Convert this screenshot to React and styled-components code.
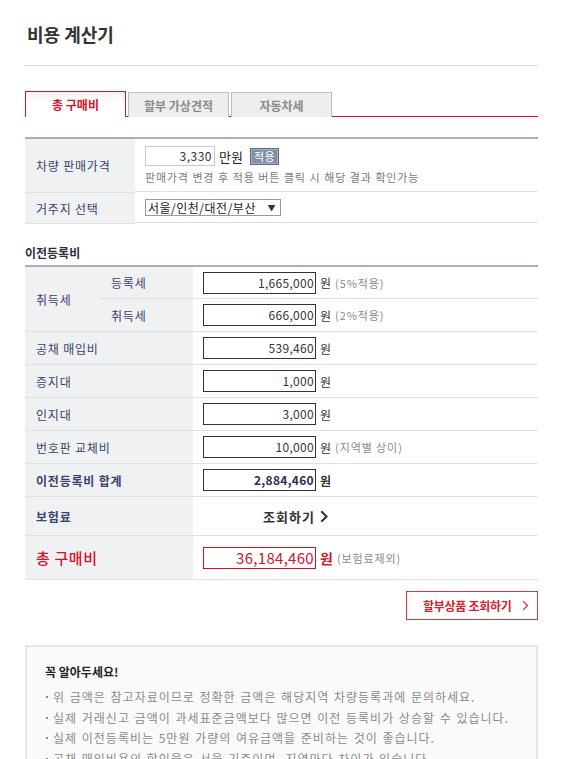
import React from "react";
import styled, { createGlobalStyle } from "styled-components";

const GlobalStyle = createGlobalStyle`
  html, body {
    margin: 0;
    padding: 0;
    background: #fff;
  }
  body {
    font-family: "Noto Sans CJK KR", "Noto Sans", sans-serif;
    color: #333;
    font-size: 12px;
  }
`;

const fees = [
  { label: "공채 매입비", value: "539,460" },
  { label: "증지대", value: "1,000" },
  { label: "인지대", value: "3,000" },
  { label: "번호판 교체비", value: "10,000", note: "(지역별 상이)" },
];

const notices = [
  "위 금액은 참고자료이므로 정확한 금액은 해당지역 차량등록과에 문의하세요.",
  "실제 거래신고 금액이 과세표준금액보다 많으면 이전 등록비가 상승할 수 있습니다.",
  "실제 이전등록비는 5만원 가량의 여유금액을 준비하는 것이 좋습니다.",
  "공채 매입비용의 할인율은 서울 기준이며, 지역마다 차이가 있습니다.",
];

function Chevron({ size = 10, weight = 1.3 }) {
  return (
    <svg width={size * 0.6} height={size} viewBox="0 0 6 10" fill="none">
      <path d="M1 1l4 4-4 4" stroke="currentColor" strokeWidth={weight} />
    </svg>
  );
}

export default function App() {
  return (
    <Page>
      <GlobalStyle />
      <Title>비용 계산기</Title>
      <Divider />

      <TabBar>
        <Tab $active>총 구매비</Tab>
        <Tab>할부 가상견적</Tab>
        <Tab>자동차세</Tab>
      </TabBar>

      <PriceTable>
        <Label $tall>차량 판매가격</Label>
        <Value $tall>
          <InputLine>
            <SmallInput>3,330</SmallInput>
            <Unit>만원</Unit>
            <ApplyButton>적용</ApplyButton>
          </InputLine>
          <Helper>판매가격 변경 후 적용 버튼 클릭 시 해당 결과 확인가능</Helper>
        </Value>
        <Label>거주지 선택</Label>
        <Value>
          <SelectBox>
            서울/인천/대전/부산 <Arrow>▼</Arrow>
          </SelectBox>
        </Value>
      </PriceTable>

      <SectionTitle>이전등록비</SectionTitle>

      <FeeTable>
        <GroupLabel>취득세</GroupLabel>
        <SubLabel $first>등록세</SubLabel>
        <FeeValue $first>
          <AmountBox>1,665,000</AmountBox>
          <Won>원</Won>
          <Note>(5%적용)</Note>
        </FeeValue>
        <SubLabel>취득세</SubLabel>
        <FeeValue>
          <AmountBox>666,000</AmountBox>
          <Won>원</Won>
          <Note>(2%적용)</Note>
        </FeeValue>

        {fees.map((f) => (
          <React.Fragment key={f.label}>
            <FeeLabel>{f.label}</FeeLabel>
            <FeeValue>
              <AmountBox>{f.value}</AmountBox>
              <Won>원</Won>
              {f.note && <Note>{f.note}</Note>}
            </FeeValue>
          </React.Fragment>
        ))}

        <FeeLabel $bold>이전등록비 합계</FeeLabel>
        <FeeValue>
          <AmountBox $bold>2,884,460</AmountBox>
          <Won $bold>원</Won>
        </FeeValue>

        <FeeLabel $bold $height={38}>보험료</FeeLabel>
        <FeeValue $height={38}>
          <LookupLink>
            조회하기
            <Chevron size={13} weight={1.6} />
          </LookupLink>
        </FeeValue>

        <FeeLabel $total $height={43}>총 구매비</FeeLabel>
        <FeeValue $height={43}>
          <AmountBox $total>36,184,460</AmountBox>
          <Won $total>원</Won>
          <Note>(보험료제외)</Note>
        </FeeValue>
      </FeeTable>

      <ButtonRow>
        <OutlineButton>
          할부상품 조회하기
          <Chevron size={11} weight={1.1} />
        </OutlineButton>
      </ButtonRow>

      <NoticeBox>
        <NoticeTitle>꼭 알아두세요!</NoticeTitle>
        <NoticeList>
          {notices.map((n) => (
            <li key={n}>{n}</li>
          ))}
        </NoticeList>
      </NoticeBox>
    </Page>
  );
}

const navy = "#3b4368";
const red = "#d5142a";

const Page = styled.div`
  width: 513px;
  padding: 0 25px 40px;
`;

const Title = styled.h1`
  margin: 0;
  padding: 22px 2px 0;
  font-size: 18px;
  line-height: 24px;
  font-weight: 700;
  color: #333;
  letter-spacing: 0;
`;

const Divider = styled.div`
  margin-top: 19px;
  height: 1px;
  background: #dcdcdc;
`;

const TabBar = styled.div`
  margin-top: 25px;
  display: flex;
  gap: 2px;
  height: 25px;
  border-bottom: 1px solid ${red};
`;

const Tab = styled.div`
  box-sizing: border-box;
  width: 101px;
  height: ${(p) => (p.$active ? "26px" : "25px")};
  margin-bottom: ${(p) => (p.$active ? "-1px" : "0")};
  margin-top: ${(p) => (p.$active ? "0" : "1px")};
  display: flex;
  align-items: center;
  justify-content: center;
  border: 1px solid ${(p) => (p.$active ? red : "#b9bcc7")};
  border-bottom: none;
  background: ${(p) =>
    p.$active ? "linear-gradient(#fbeeee, #ffffff 45%)" : "#eeeeee"};
  color: ${(p) => (p.$active ? red : "#8a8a8a")};
  font-size: 12px;
  font-weight: 700;
  letter-spacing: 0;
`;

const PriceTable = styled.div`
  margin-top: 20px;
  display: grid;
  grid-template-columns: 110px 1fr;
  border-top: 2px solid #a9aeb9;
`;

const Label = styled.div`
  height: ${(p) => (p.$tall ? "53px" : "30px")};
  display: flex;
  align-items: center;
  padding-left: 11px;
  background: #f0f1f3;
  border-bottom: 1px solid #e1e1e1;
  color: ${navy};
  font-size: 12px;
  letter-spacing: 0.8px;
`;

const Value = styled.div`
  height: ${(p) => (p.$tall ? "53px" : "30px")};
  box-sizing: border-box;
  padding: ${(p) => (p.$tall ? "7px 10px 0" : "0 10px")};
  display: flex;
  flex-direction: column;
  justify-content: ${(p) => (p.$tall ? "flex-start" : "center")};
  border-bottom: 1px solid #e1e1e1;
`;

const InputLine = styled.div`
  display: flex;
  align-items: center;
  gap: 4px;
`;

const SmallInput = styled.div`
  box-sizing: border-box;
  width: 70px;
  height: 20px;
  border: 1px solid #c6c8cc;
  padding-right: 2px;
  text-align: right;
  font-size: 12px;
  line-height: 18px;
  color: #333;
  letter-spacing: 0.5px;
`;

const Unit = styled.span`
  font-size: 13px;
  color: #222;
  margin-right: 3px;
`;

const ApplyButton = styled.span`
  box-sizing: border-box;
  height: 17px;
  padding: 0 3px;
  background: #8190a6;
  border: 1px solid #5f6d84;
  box-shadow: inset 0 0 0 1px #a3afc1;
  color: #fff;
  font-size: 11px;
  line-height: 15px;
  letter-spacing: 0.5px;
`;

const Helper = styled.div`
  margin-top: 3px;
  font-size: 11px;
  line-height: 16px;
  color: #7a7a7a;
  letter-spacing: 0.8px;
  word-spacing: 0.5px;
`;

const SelectBox = styled.div`
  box-sizing: border-box;
  width: 136px;
  height: 17px;
  display: flex;
  align-items: center;
  justify-content: space-between;
  padding: 0 4px 0 2px;
  border: 1px solid #9a9a9a;
  font-size: 12px;
  color: #222;
  letter-spacing: 0.5px;
`;

const Arrow = styled.span`
  font-size: 8px;
  color: #333;
`;

const SectionTitle = styled.h2`
  margin: 0;
  padding: 21px 0 4px;
  font-size: 12px;
  line-height: 16px;
  font-weight: 700;
  color: #2e2e38;
`;

const FeeTable = styled.div`
  display: grid;
  grid-template-columns: 75px 93px 1fr;
  border-top: 2px solid #a9aeb9;
`;

const GroupLabel = styled.div`
  grid-row: span 2;
  display: flex;
  align-items: center;
  padding-left: 11px;
  background: #f0f1f3;
  border-bottom: 1px solid #e1e1e1;
  color: ${navy};
  font-size: 12px;
  letter-spacing: 0.8px;
`;

const SubLabel = styled.div`
  height: ${(p) => (p.$first ? "31px" : "32px")};
  display: flex;
  align-items: center;
  padding-left: 11px;
  background: #f0f1f3;
  border-bottom: 1px solid #e1e1e1;
  color: ${navy};
  font-size: 12px;
  letter-spacing: 0.8px;
`;

const FeeLabel = styled.div`
  grid-column: span 2;
  height: ${(p) => p.$height || 32}px;
  display: flex;
  align-items: center;
  padding-left: 11px;
  background: #f0f1f3;
  border-bottom: 1px solid #e1e1e1;
  color: ${(p) => (p.$total ? red : navy)};
  font-size: ${(p) => (p.$total ? "15px" : "12px")};
  font-weight: ${(p) => (p.$bold ? 700 : p.$total ? 500 : 400)};
  letter-spacing: ${(p) => (p.$total ? "0.6px" : "0.8px")};
`;

const FeeValue = styled.div`
  height: ${(p) => (p.$first ? 31 : p.$height || 32)}px;
  display: flex;
  align-items: center;
  padding-left: 10px;
  border-bottom: 1px solid #e1e1e1;
`;

const AmountBox = styled.div`
  box-sizing: border-box;
  width: 113px;
  height: 22px;
  padding-right: 1px;
  border: 1px solid ${(p) => (p.$total ? "#d8101e" : "#333")};
  text-align: right;
  font-size: ${(p) => (p.$total ? "15px" : "12px")};
  line-height: 20px;
  font-weight: ${(p) => (p.$bold ? 700 : 400)};
  color: ${(p) => (p.$total ? red : p.$bold ? "#2f3050" : "#333")};
  letter-spacing: 0.3px;
`;

const Won = styled.span`
  margin-left: 4px;
  font-size: ${(p) => (p.$total ? "14px" : "12px")};
  font-weight: ${(p) => (p.$bold || p.$total ? 700 : 400)};
  color: ${(p) => (p.$total ? red : "#333")};
`;

const Note = styled.span`
  margin-left: 4px;
  font-size: 11px;
  color: #8a8a8a;
  letter-spacing: 0.9px;
`;

const LookupLink = styled.span`
  margin-left: 60px;
  display: inline-flex;
  align-items: center;
  gap: 5px;
  font-size: 13px;
  font-weight: 700;
  color: #333;
  letter-spacing: 1px;
`;

const ButtonRow = styled.div`
  display: flex;
  justify-content: flex-end;
  margin-top: 11px;
`;

const OutlineButton = styled.div`
  box-sizing: border-box;
  width: 132px;
  height: 29px;
  display: flex;
  align-items: center;
  justify-content: flex-end;
  gap: 11px;
  padding-right: 8px;
  border: 1px solid #e03340;
  color: #d9222f;
  font-size: 12px;
  font-weight: 700;
  letter-spacing: -0.3px;
`;

const NoticeBox = styled.div`
  margin-top: 25px;
  padding: 17px 18px 20px;
  border: 2px solid #e7e7e7;
  background: #fafafa;
`;

const NoticeTitle = styled.div`
  font-size: 12px;
  line-height: 16px;
  font-weight: 700;
  color: #222;
`;

const NoticeList = styled.ul`
  margin: 7px 0 0;
  padding: 0;
  list-style: none;

  li {
    position: relative;
    padding-left: 8px;
    font-size: 12px;
    line-height: 20.5px;
    color: #8a8a8a;
    letter-spacing: 1px;
    word-spacing: 1px;
    white-space: nowrap;
  }

  li::before {
    content: "";
    position: absolute;
    left: 1px;
    top: 9px;
    width: 2px;
    height: 2px;
    background: #8a8a8a;
  }
`;
